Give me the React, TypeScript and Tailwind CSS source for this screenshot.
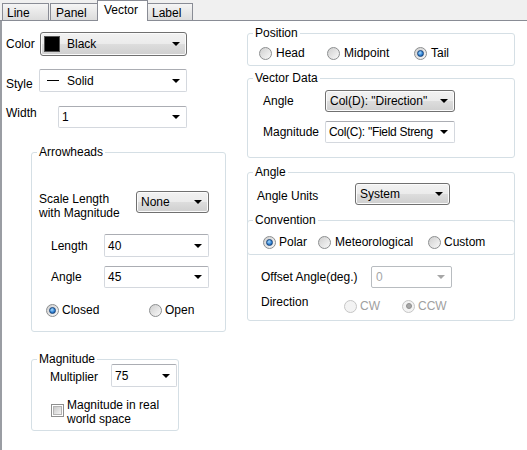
import clsx from "clsx";
import type { ReactNode } from "react";

function Tab({ label, active, className }: { label: string; active?: boolean; className?: string }) {
  return (
    <div
      className={clsx(
        "border-t border-x border-[#898c95] pt-[2px]",
        active
          ? "relative z-10 h-[21px] -mb-[1px] bg-white"
          : "h-[17px] bg-[linear-gradient(to_bottom,#f5f5f5,#dcdcdc)]",
        className
      )}
    >
      {label}
    </div>
  );
}

function Arrow({ disabled }: { disabled?: boolean }) {
  return (
    <span
      className={clsx(
        "ml-[3px] mr-[6px] shrink-0 w-0 h-0 border-x-[4px] border-x-transparent border-t-[4px]",
        disabled ? "border-t-[#a6a6a6]" : "border-t-black"
      )}
    />
  );
}

function Combo({
  className,
  raised,
  disabled,
  children,
}: {
  className: string;
  raised?: boolean;
  disabled?: boolean;
  children: ReactNode;
}) {
  return (
    <div
      className={clsx(
        "flex items-center shrink-0 overflow-hidden whitespace-nowrap",
        raised
          ? "rounded-[3px] border border-[#707070] bg-[linear-gradient(to_bottom,#f2f2f2_0%,#ebebeb_50%,#dddddd_50%,#cfcfcf_100%)] shadow-[inset_0_0_0_1px_#fbfbfb] pl-[4px]"
          : disabled
          ? "rounded-[2px] border border-[#b8bcc0] bg-white pl-[4px] text-[#a6a6a6]"
          : "rounded-[2px] border border-[#d4d8de] border-t-[#abadb3] bg-white pl-[3px]",
        className
      )}
    >
      <span className="flex-1 min-w-0 flex items-center">{children}</span>
      <Arrow disabled={disabled} />
    </div>
  );
}

function Radio({
  label,
  checked,
  disabled,
  className,
}: {
  label: string;
  checked?: boolean;
  disabled?: boolean;
  className?: string;
}) {
  return (
    <div className={clsx("flex items-center gap-[3px] shrink-0", className)}>
      <span
        className={clsx(
          "w-[13px] h-[13px] rounded-full border flex items-center justify-center",
          disabled
            ? "border-[#c6c6c6] bg-[#f3f3f3]"
            : "border-[#8c8e8f] bg-[linear-gradient(135deg,#cfcfcf,#f9f9f9)]"
        )}
      >
        {checked &&
          (disabled ? (
            <span className="w-[6px] h-[6px] rounded-full bg-[#a8a8a8] border border-[#8f8f8f]" />
          ) : (
            <span className="w-[7px] h-[7px] rounded-full border border-[#17437a] bg-[radial-gradient(circle_at_40%_35%,#a8dcff,#2a7cd0_60%,#164f8e)]" />
          ))}
      </span>
      <span className={disabled ? "text-[#a0a0a0]" : undefined}>{label}</span>
    </div>
  );
}

function Group({ title, className, children }: { title: string; className?: string; children: ReactNode }) {
  return (
    <fieldset className={clsx("border border-[#d5dfe5] rounded-[3px]", className)}>
      <legend className="ml-[5px] px-[2px] leading-[14px]">{title}</legend>
      {children}
    </fieldset>
  );
}

export default function App() {
  return (
    <div className="w-[527px] h-[450px] overflow-hidden flex flex-col bg-[#f0f0f0] text-black text-[12px] leading-[14px] font-['Liberation_Sans',Arial,sans-serif]">
      {/* Tabs */}
      <div className="h-[21px] shrink-0 flex items-end pl-[2px] border-b border-[#898c95]">
        <Tab label="Line" className="w-[47px] pl-[4px]" />
        <Tab label="Panel" className="ml-[1px] w-[49px] pl-[5px]" />
        <Tab label="Vector" active className="-ml-[2px] w-[51px] pl-[6px]" />
        <Tab label="Label" className="-ml-[2px] w-[47px] pl-[5px]" />
      </div>

      {/* Page */}
      <div className="flex-1 flex bg-white border-l-[2px] border-[#9a9da3]">
        {/* Left column */}
        <div className="w-[245px] shrink-0 flex flex-col">
          <div className="mt-[11px] pl-[4px] flex items-center">
            <span className="w-[34px] shrink-0">Color</span>
            <Combo raised className="w-[147px] h-[24px]">
              <span className="shrink-0 w-[16px] h-[16px] bg-black border border-[#555] mr-[7px] -ml-[1px]" />
              Black
            </Combo>
          </div>

          <div className="mt-[13px] pl-[4px] flex items-start">
            <span className="w-[33px] shrink-0 pt-[8px]">Style</span>
            <Combo className="w-[148px] h-[23px]">
              <span className="shrink-0 w-[12px] h-[1px] bg-black ml-[4px] mr-[8px]" />
              Solid
            </Combo>
          </div>

          <div className="mt-[14px] pl-[4px] flex items-start">
            <span className="w-[52px] shrink-0">Width</span>
            <Combo className="w-[129px] h-[22px]">1</Combo>
          </div>

          <Group title="Arrowheads" className="ml-[29px] mt-[17px] w-[195px] pb-[14px]">
            <div className="mt-[32px] ml-[7px] flex items-start">
              <span className="w-[97px] shrink-0 pt-[1px]">
                Scale Length
                <br />
                with Magnitude
              </span>
              <Combo raised className="w-[73px] h-[22px]">None</Combo>
            </div>
            <div className="mt-[14px] ml-[19px] flex items-center">
              <span className="w-[53px] shrink-0">Length</span>
              <Combo className="w-[105px] h-[23px]">40</Combo>
            </div>
            <div className="mt-[9px] ml-[19px] flex items-center">
              <span className="w-[53px] shrink-0">Angle</span>
              <Combo className="w-[105px] h-[22px]">45</Combo>
            </div>
            <div className="mt-[15px] ml-[14px] flex items-center h-[14px]">
              <Radio label="Closed" checked className="w-[103px]" />
              <Radio label="Open" />
            </div>
          </Group>

          <Group title="Magnitude" className="ml-[29px] mt-[20px] w-[148px] pb-[4px]">
            <div className="-mt-[2px] ml-[18px] flex items-center">
              <span className="w-[61px] shrink-0 pt-[2px]">Multiplier</span>
              <Combo className="w-[66px] h-[23px]">75</Combo>
            </div>
            <div className="mt-[11px] ml-[19px] flex items-start gap-[3px]">
              <span className="mt-[6px] w-[13px] h-[13px] shrink-0 border border-[#8e8f8f] bg-white p-[1px]">
                <span className="block w-full h-full bg-[linear-gradient(135deg,#c9c9c9,#f4f4f4)] border border-[#b4b4b4]" />
              </span>
              <span>
                Magnitude in real
                <br />
                world space
              </span>
            </div>
          </Group>
        </div>

        {/* Right column */}
        <div className="w-[268px] shrink-0 flex flex-col">
          <Group title="Position" className="mt-[5px] pb-[5px]">
            <div className="mt-[6px] ml-[11px] flex items-center h-[14px]">
              <Radio label="Head" className="w-[68px] gap-[4px]" />
              <Radio label="Midpoint" className="w-[87px] gap-[4px]" />
              <Radio label="Tail" checked className="gap-[4px]" />
            </div>
          </Group>

          <Group title="Vector Data" className="mt-[5px] pb-[14px]">
            <div className="mt-[5px] ml-[15px] flex items-center">
              <span className="w-[62px] shrink-0">Angle</span>
              <Combo raised className="w-[130px] h-[22px]">Col(D): "Direction"</Combo>
            </div>
            <div className="mt-[9px] ml-[15px] flex items-center">
              <span className="w-[62px] shrink-0">Magnitude</span>
              <Combo className="w-[130px] h-[22px] pl-[2px]">
                <span className="tracking-[-0.3px]">Col(C): "Field Streng</span>
              </Combo>
            </div>
          </Group>

          <Group title="Angle" className="mt-[7px] pb-[7px]">
            <div className="mt-[4px] ml-[9px] flex items-start">
              <span className="w-[98px] shrink-0 pt-[6px]">Angle Units</span>
              <Combo raised className="w-[95px] h-[22px]">System</Combo>
            </div>
            <Group title="Convention" className="-mx-[1px] mt-[8px] pb-[5px]">
              <div className="mt-[8px] ml-[15px] flex items-center h-[14px]">
                <Radio label="Polar" checked className="w-[55px] gap-[2px]" />
                <Radio label="Meteorological" className="w-[110px] gap-[4px]" />
                <Radio label="Custom" />
              </div>
            </Group>
            <div className="mt-[11px] ml-[13px] flex items-center">
              <span className="w-[110px] shrink-0">Offset Angle(deg.)</span>
              <Combo disabled className="w-[81px] h-[22px]">0</Combo>
            </div>
            <div className="mt-[7px] ml-[13px] flex items-start">
              <span className="w-[83px] shrink-0">Direction</span>
              <div className="pt-[4px] flex items-center">
                <Radio label="CW" disabled className="w-[58px]" />
                <Radio label="CCW" disabled checked className="gap-[2px]" />
              </div>
            </div>
          </Group>
        </div>
      </div>
    </div>
  );
}
